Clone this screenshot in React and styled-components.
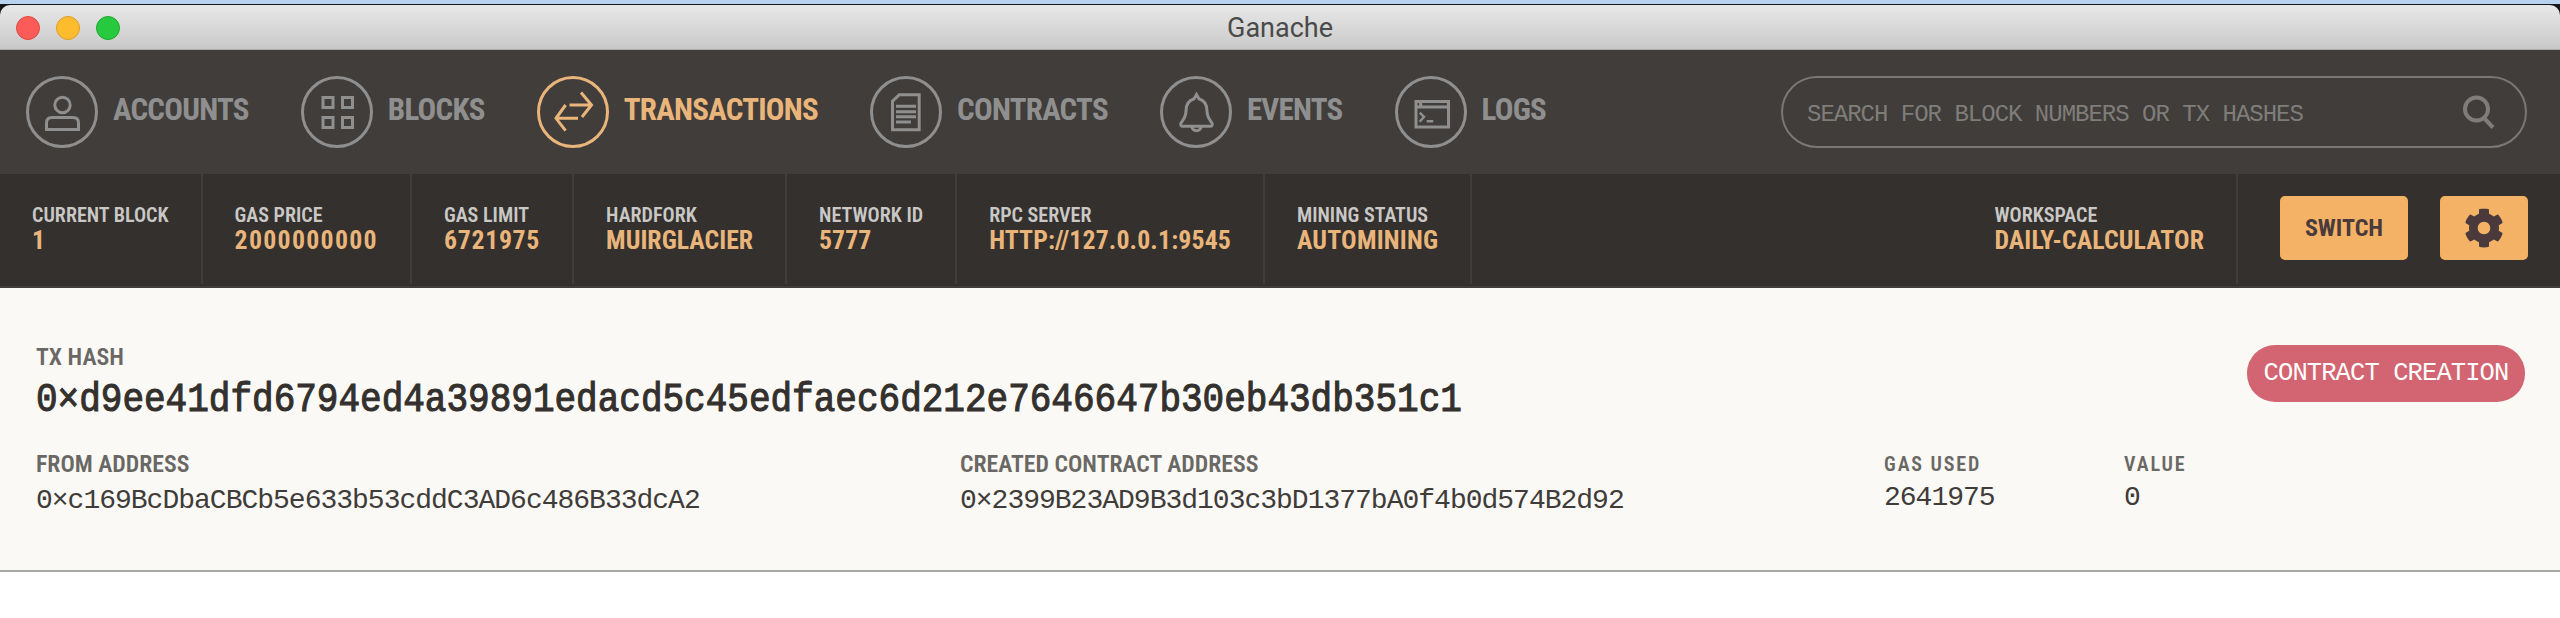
import React from 'react';
import styled, { createGlobalStyle } from 'styled-components';
import { FaCog } from 'react-icons/fa';

const Global = createGlobalStyle`
  html, body { margin: 0; padding: 0; background: #fff; }
  body { font-family: Roboto, "Liberation Sans", sans-serif; }
`;

const sans = `font-family: Roboto, "Liberation Sans", sans-serif; font-stretch: 75%;`;
const mono = `font-family: "Liberation Mono", monospace;`;
const GOLD = '#e9b57b';
const GREY = '#8f8f8f';

const Desktop = styled.div`
  width: 2560px;
  border-top: 4px solid #b8d2ef;
  background: #14171c;
  padding-top: 1px;
`;
const Window = styled.div`
  display: flex;
  flex-direction: column;
`;
const TitleBar = styled.header`
  position: relative;
  height: 44px;
  border-bottom: 1px solid #a9a9a9;
  border-radius: 10px 10px 0 0;
  background: linear-gradient(#e8e8e8, #c9c9c9);
  display: flex;
  align-items: center;
  justify-content: center;
`;
const Lights = styled.div`
  position: absolute;
  left: 16px;
  top: 11px;
  display: flex;
  gap: 16px;
`;
const Light = styled.span`
  width: 24px;
  height: 24px;
  box-sizing: border-box;
  border-radius: 50%;
  background: ${p => p.$c};
  border: 1px solid ${p => p.$b};
`;
const Title = styled.h1`
  margin: 2px 0 0;
  font: 400 27px/44px Roboto, sans-serif;
  color: #4a4a4a;
`;
const Nav = styled.nav`
  height: 124px;
  background: #413d3a;
  display: flex;
  align-items: center;
  padding: 0 33px 0 26px;
  gap: 52px;
`;
const NavItem = styled.div`
  display: flex;
  align-items: center;
  gap: 15px;
  color: ${p => (p.$active ? GOLD : GREY)};
`;
const NavLabel = styled.span`
  ${sans}
  font-weight: 700;
  font-size: 31px;
  line-height: 36px;
  letter-spacing: -0.75px;
  margin-bottom: 5px;
`;
const IconSvg = styled.svg`
  width: 72px;
  height: 72px;
  flex: none;
  fill: none;
  stroke: currentColor;
  stroke-width: 3;
`;
const Search = styled.div`
  margin-left: auto;
  box-sizing: border-box;
  width: 746px;
  height: 72px;
  border: 2px solid #7a7875;
  border-radius: 36px;
  display: flex;
  align-items: center;
  justify-content: space-between;
  padding: 0 29px 0 24px;
  color: #7f7d7a;
`;
const Placeholder = styled.span`
  ${mono}
  font-size: 24px;
  letter-spacing: -1px;
  margin-top: 4px;
`;
const SearchIcon = styled.svg`
  width: 34px;
  height: 34px;
  fill: none;
  stroke: currentColor;
  stroke-width: 4;
`;
const StatusBar = styled.section`
  height: 112px;
  background: #33302d;
  border-bottom: 2px solid #413d3a;
  display: flex;
  align-items: flex-start;
`;
const Stat = styled.div`
  box-sizing: border-box;
  height: 110px;
  padding: 30px 32px 0;
  border-right: 2px solid #413d3a;
  ${p => p.$right && 'margin-left: auto;'}
`;
const StatLabel = styled.div`
  ${sans}
  font-weight: 600;
  font-size: 20.1px;
  line-height: 22px;
  color: #c9c8c6;
  white-space: nowrap;
`;
const StatValue = styled.div`
  ${sans}
  font-weight: 700;
  font-size: 25.8px;
  line-height: 26px;
  margin-top: 1px;
  color: ${GOLD};
  white-space: nowrap;
  letter-spacing: ${p => p.$ls || 0}px;
`;
const Actions = styled.div`
  display: flex;
  gap: 32px;
  padding: 22px 32px 0 42px;
`;
const Button = styled.button`
  ${sans}
  box-sizing: border-box;
  width: ${p => p.$w}px;
  height: 64px;
  padding: 0;
  border: 0;
  border-radius: 5px;
  background: #f4b266;
  color: #4a3a3c;
  font-weight: 700;
  font-size: 24px;
  display: flex;
  align-items: center;
  justify-content: center;
`;
const Main = styled.main`
  height: 282px;
  background: #faf9f5;
  border-bottom: 2px solid #a8a7a7;
  padding: 0 36px;
`;
const HashRow = styled.div`
  display: flex;
  justify-content: space-between;
  align-items: flex-start;
  padding-top: 57px;
  height: 93px;
`;
const Label = styled.div`
  ${sans}
  font-weight: 600;
  font-size: 23.8px;
  line-height: 24px;
  color: #6a6864;
  white-space: nowrap;
`;
const HashValue = styled.div`
  ${mono}
  font-size: 40px;
  line-height: 44px;
  color: #33302d;
  -webkit-text-stroke: 1.1px #33302d;
  white-space: nowrap;
  transform: scaleX(0.9);
  transform-origin: left center;
  margin-top: 10px;
`;
const Pill = styled.div`
  ${mono}
  margin: 0 -1px 0 0;
  box-sizing: border-box;
  height: 57px;
  width: 278px;
  border-radius: 28px;
  background: #d26571;
  color: #fff;
  font-size: 25.5px;
  letter-spacing: -0.9px;
  display: flex;
  align-items: center;
  justify-content: center;
`;
const Details = styled.div`
  display: grid;
  grid-template-columns: 924px 924px 240px 1fr;
  margin-top: 14px;
`;
const SmallLabel = styled.div`
  ${sans}
  font-weight: 600;
  font-size: 20px;
  line-height: 24px;
  letter-spacing: 1.9px;
  color: #6a6864;
  white-space: nowrap;
`;
const Value = styled.div`
  ${mono}
  font-size: 28px;
  letter-spacing: -1px;
  line-height: 30px;
  color: #3f3c39;
  white-space: nowrap;
  margin-top: ${p => p.$mt}px;
`;

const Circle = () => <circle cx="36" cy="36" r="34.5" />;
const icons = {
  accounts: (
    <>
      <circle cx="36.5" cy="29" r="7.7" />
      <path d="M20.5 53.5V47q0-5.5 5.5-5.5h21q5.5 0 5.5 5.5v6.5z" />
    </>
  ),
  blocks: (
    <>
      <rect x="22" y="21.5" width="10" height="10" />
      <rect x="41.5" y="21.5" width="10" height="10" />
      <rect x="22" y="41.5" width="10" height="10" />
      <rect x="41.5" y="41.5" width="10" height="10" />
    </>
  ),
  transactions: (
    <>
      <path d="M32.5 29H54M44 16.5 54.5 29 45 41" />
      <path d="M41 42.3H20M28.6 29 19 42.3l9.6 12.4" />
    </>
  ),
  contracts: (
    <>
      <path d="M22.5 53.8V25.2l6.7-6.4h20v35z" />
      <path d="M26 30.3h20M26 35.7h20M26 40.8h20M26 46h15" />
    </>
  ),
  events: (
    <>
      <path d="M36.5 18.5l2.4 4.2C45 24.5 47 29 47 35c0 6 3 9 5 12 1 2 0 3.2-2 3.2H23c-2 0-3-1.2-2-3.2 2-3 5-6 5-12 0-6 2-10.5 8.1-12.3z" />
      <path d="M32 50.5c0 5.5 9 5.5 9 0" />
    </>
  ),
  logs: (
    <>
      <rect x="21" y="25.5" width="32.5" height="25.5" />
      <path d="M21 31h32.5M25.7 25.5V31" />
      <path d="M24.7 36.7 29 40.8l-4.3 5M31.7 45.2h6.6" strokeWidth="2.5" />
    </>
  ),
};

const NavEntry = ({ icon, label, active }) => (
  <NavItem $active={active}>
    <IconSvg viewBox="0 0 72 72">
      <Circle />
      {icons[icon]}
    </IconSvg>
    <NavLabel>{label}</NavLabel>
  </NavItem>
);

const StatEntry = ({ label, value, ls, right }) => (
  <Stat $right={right}>
    <StatLabel>{label}</StatLabel>
    <StatValue $ls={ls}>{value}</StatValue>
  </Stat>
);

export default function App() {
  return (
    <Desktop>
      <Global />
      <Window>
        <TitleBar>
          <Lights>
            <Light $c="#fc5c57" $b="#e5483f" />
            <Light $c="#fdbc2e" $b="#de9f22" />
            <Light $c="#27c93f" $b="#1fa82e" />
          </Lights>
          <Title>Ganache</Title>
        </TitleBar>
        <Nav>
          <NavEntry icon="accounts" label="ACCOUNTS" />
          <NavEntry icon="blocks" label="BLOCKS" />
          <NavEntry icon="transactions" label="TRANSACTIONS" active />
          <NavEntry icon="contracts" label="CONTRACTS" />
          <NavEntry icon="events" label="EVENTS" />
          <NavEntry icon="logs" label="LOGS" />
          <Search>
            <Placeholder>SEARCH FOR BLOCK NUMBERS OR TX HASHES</Placeholder>
            <SearchIcon viewBox="0 0 34 34">
              <circle cx="14.5" cy="14" r="11.5" />
              <path d="M22 23l9 9.5" />
            </SearchIcon>
          </Search>
        </Nav>
        <StatusBar>
          <StatEntry label="CURRENT BLOCK" value="1" />
          <StatEntry label="GAS PRICE" value="2000000000" ls={1.3} />
          <StatEntry label="GAS LIMIT" value="6721975" ls={0.7} />
          <StatEntry label="HARDFORK" value="MUIRGLACIER" />
          <StatEntry label="NETWORK ID" value="5777" />
          <StatEntry label="RPC SERVER" value="HTTP://127.0.0.1:9545" ls={0.12} />
          <StatEntry label="MINING STATUS" value="AUTOMINING" ls={0.2} />
          <StatEntry label="WORKSPACE" value="DAILY-CALCULATOR" ls={0.1} right />
          <Actions>
            <Button $w={128}>SWITCH</Button>
            <Button $w={88}><FaCog size={40} /></Button>
          </Actions>
        </StatusBar>
        <Main>
          <HashRow>
            <div>
              <Label>TX HASH</Label>
              <HashValue>0×d9ee41dfd6794ed4a39891edacd5c45edfaec6d212e7646647b30eb43db351c1</HashValue>
            </div>
            <Pill>CONTRACT CREATION</Pill>
          </HashRow>
          <Details>
            <div>
              <Label>FROM ADDRESS</Label>
              <Value $mt={10}>0×c169BcDbaCBCb5e633b53cddC3AD6c486B33dcA2</Value>
            </div>
            <div>
              <Label>CREATED CONTRACT ADDRESS</Label>
              <Value $mt={10}>0×2399B23AD9B3d103c3bD1377bA0f4b0d574B2d92</Value>
            </div>
            <div>
              <SmallLabel>GAS USED</SmallLabel>
              <Value $mt={7}>2641975</Value>
            </div>
            <div>
              <SmallLabel>VALUE</SmallLabel>
              <Value $mt={7}>0</Value>
            </div>
          </Details>
        </Main>
      </Window>
    </Desktop>
  );
}
